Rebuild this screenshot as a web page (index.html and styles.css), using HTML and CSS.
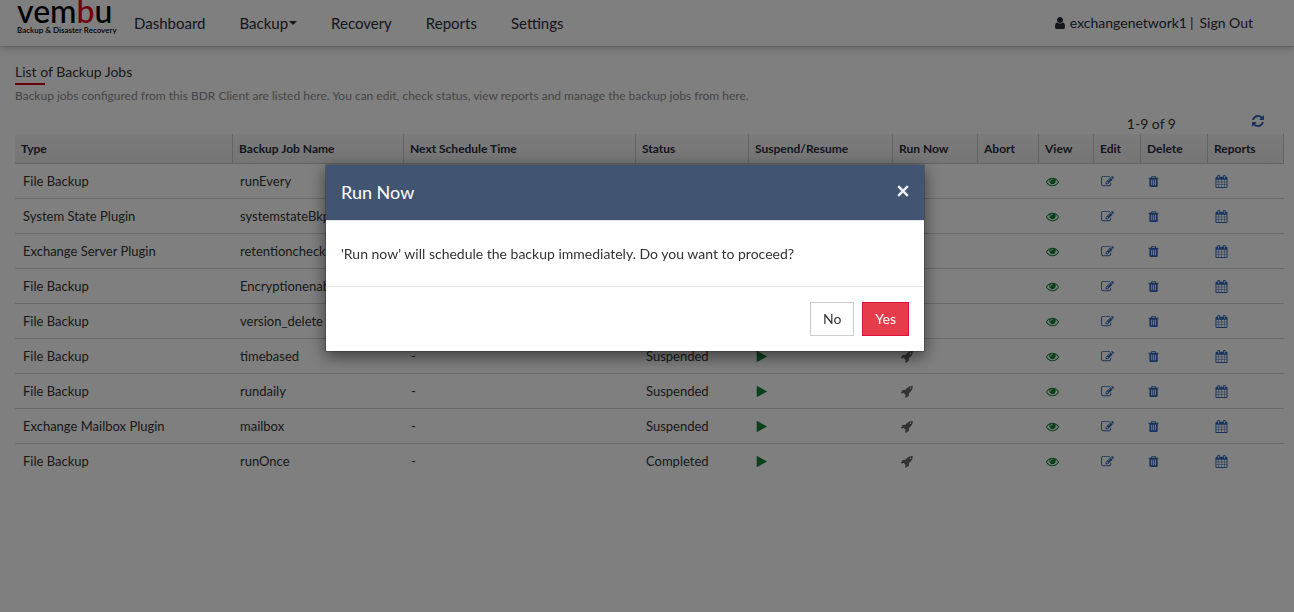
FILE: index.html
```html
<!DOCTYPE html>
<html lang="en">
<head>
<meta charset="utf-8">
<meta name="viewport" content="width=device-width, initial-scale=1">
<title>Vembu BDR - List of Backup Jobs</title>
<link rel="stylesheet" href="styles.css">
</head>
<body>
<svg class="sprite" aria-hidden="true">
  <symbol id="user" viewBox="0 0 1792 1792"><path d="M1536 1399q0 109-62.5 187t-150.5 78h-854q-88 0-150.5-78t-62.5-187q0-85 8.5-160.5t31.5-152 58.5-131 94-89 134.500-34.500q131 128 313 128t313-128q76 0 134.500 34.500t94 89 58.500 131 31.500 152 8.500 160.500zm-256-887q0 159-112.500 271.500t-271.500 112.500-271.500-112.500-112.500-271.500 112.500-271.500 271.500-112.500 271.500 112.500 112.500 271.500z"/></symbol>
  <symbol id="refresh" viewBox="0 0 1792 1792"><path d="M1639 1056q0 5-1 7-64 268-268 434.500t-478 166.500q-146 0-282.500-55t-243.500-157l-129 129q-19 19-45 19t-45-19-19-45v-448q0-26 19-45t45-19h448q26 0 45 19t19 45-19 45l-137 137q71 66 161 102t187 36q134 0 250-65t186-179q11-17 53-117 8-23 30-23h192q13 0 22.500 9.500t9.500 22.500zm25-800v448q0 26-19 45t-45 19h-448q-26 0-45-19t-19-45 19-45l138-138q-148-137-349-137-134 0-250 65t-186 179q-11 17-53 117-8 23-30 23h-199q-13 0-22.500-9.500t-9.500-22.500v-7q65-268 270-434.500t480-166.500q146 0 284 55.500t245 156.500l130-129q19-19 45-19t45 19 19 45z"/></symbol>
  <symbol id="play" viewBox="96 0 1792 1792"><path d="M1576 927l-1328 738q-23 13-39.500 3t-16.500-36v-1472q0-26 16.500-36t39.500 3l1328 738q23 13 23 31t-23 31z"/></symbol>
  <symbol id="rocket" viewBox="-96 0 1792 1792"><path d="M1440 448q0-40-28-68t-68-28-68 28-28 68 28 68 68 28 68-28 28-68zm224-288q0 249-75.500 430.500t-253.500 360.500q-81 80-195 176l-20 379q-2 16-16 26l-384 224q-7 4-16 4-12 0-23-9l-64-64q-13-14-8-32l85-276-281-281-276 85q-3 1-9 1-14 0-23-9l-64-64q-17-19-5-39l224-384q10-14 26-16l379-20q96-114 176-195 188-187 358-258t431-71q14 0 24 9.500t10 22.500z"/></symbol>
  <symbol id="eye" viewBox="0 0 1792 1792"><path d="M1664 960q-152-236-381-353 61 104 61 225 0 185-131.500 316.500t-316.500 131.500-316.500-131.500-131.500-316.500q0-121 61-225-229 117-381 353 133 205 333.500 326.500t434.500 121.500 434.500-121.500 333.500-326.500zm-720-384q0-20-14-34t-34-14q-125 0-214.500 89.500t-89.500 214.500q0 20 14 34t34 14 34-14 14-34q0-86 61-147t147-61q20 0 34-14t14-34zm848 384q0 34-20 69-140 230-376.500 368.500t-499.500 138.500-499.500-139-376.500-368q-20-35-20-69t20-69q140-229 376.500-368t499.500-139 499.500 139 376.500 368q20 35 20 69z"/></symbol>
  <symbol id="edit" viewBox="0 0 1792 1792"><path d="M888 1184l116-116-152-152-116 116v56h96v96h56zm440-720q-16-16-33 1l-350 350q-17 17-1 33t33-1l350-350q17-17 1-33zm80 594v190q0 119-84.500 203.500t-203.500 84.500h-832q-119 0-203.500-84.500t-84.500-203.500v-832q0-119 84.500-203.500t203.500-84.500h832q63 0 117 25 15 7 18 23 3 17-9 29l-49 49q-14 14-32 8-23-6-45-6h-832q-66 0-113 47t-47 113v832q0 66 47 113t113 47h832q66 0 113-47t47-113v-126q0-13 9-22l64-64q15-15 35-7t20 29zm-96-738l288 288-672 672h-288v-288zm444 132l-92 92-288-288 92-92q28-28 68-28t68 28l152 152q28 28 28 68t-28 68z"/></symbol>
  <symbol id="trash" viewBox="128 0 1792 1792"><path d="M704 1376v-704q0-14-9-23t-23-9h-64q-14 0-23 9t-9 23v704q0 14 9 23t23 9h64q14 0 23-9t9-23zm256 0v-704q0-14-9-23t-23-9h-64q-14 0-23 9t-9 23v704q0 14 9 23t23 9h64q14 0 23-9t9-23zm256 0v-704q0-14-9-23t-23-9h-64q-14 0-23 9t-9 23v704q0 14 9 23t23 9h64q14 0 23-9t9-23zm-544-992h448l-48-117q-7-9-17-11h-317q-10 2-17 11zm928 32v64q0 14-9 23t-23 9h-96v948q0 83-47 143.500t-113 60.500h-832q-66 0-113-58.500t-47-141.500v-952h-96q-14 0-23-9t-9-23v-64q0-14 9-23t23-9h309l70-167q15-37 54-63t79-26h320q40 0 79 26t54 63l70 167h309q14 0 23 9t9 23z"/></symbol>
  <symbol id="calendar" viewBox="0 0 1792 1792"><path d="M192 1664h288v-288h-288v288zm352 0h320v-288h-320v288zm-352-352h288v-320h-288v320zm352 0h320v-320h-320v320zm-352-384h288v-288h-288v288zm736 736h320v-288h-320v288zm-384-736h320v-288h-320v288zm768 736h288v-288h-288v288zm-384-352h320v-320h-320v320zm-352-864v-288q0-13-9.500-22.500t-22.500-9.500h-64q-13 0-22.500 9.500t-9.500 22.500v288q0 13 9.500 22.500t22.500 9.500h64q13 0 22.500-9.500t9.500-22.500zm736 864h288v-320h-288v320zm-384-384h320v-288h-320v288zm384 0h288v-288h-288v288zm32-480v-288q0-13-9.500-22.500t-22.500-9.500h-64q-13 0-22.500 9.500t-9.500 22.500v288q0 13 9.500 22.500t22.500 9.500h64q13 0 22.500-9.500t9.500-22.500zm384-64v1280q0 52-38 90t-90 38h-1408q-52 0-90-38t-38-90v-1280q0-52 38-90t90-38h128v-96q0-66 47-113t113-47h64q66 0 113 47t47 113v96h384v-96q0-66 47-113t113-47h64q66 0 113 47t47 113v96h128q52 0 90 38t38 90z"/></symbol>
</svg>

<header class="topbar">
  <a class="logo" href="#">
    <span class="logo-name">vem<span class="logo-accent">b</span>u</span>
    <span class="logo-tag">Backup &amp; Disaster Recovery</span>
  </a>
  <nav class="menu">
    <a href="#">Dashboard</a>
    <a href="#">Backup<span class="caret"></span></a>
    <a href="#">Recovery</a>
    <a href="#">Reports</a>
    <a href="#">Settings</a>
  </nav>
  <div class="account">
    <svg class="icon large"><use href="#user"/></svg>
    <span>exchangenetwork1</span>
    <span>|</span>
    <a class="signout" href="#">Sign Out</a>
  </div>
</header>

<main class="page">
  <h1 class="title">List of Backup Jobs</h1>
  <p class="intro">Backup jobs configured from this BDR Client are listed here. You can edit, check status, view reports and manage the backup jobs from here.</p>
  <div class="pager">
    <span>1-9 of 9</span>
    <button class="icon-btn blue refresh" aria-label="Refresh"><svg class="icon large"><use href="#refresh"/></svg></button>
  </div>
  <table class="jobs">
    <colgroup>
      <col class="c-type"><col class="c-name"><col class="c-next"><col class="c-status"><col class="c-suspend"><col class="c-run"><col class="c-abort"><col class="c-view"><col class="c-edit"><col class="c-delete"><col class="c-reports">
    </colgroup>
    <thead>
      <tr><th>Type</th><th>Backup Job Name</th><th>Next Schedule Time</th><th>Status</th><th>Suspend/Resume</th><th>Run Now</th><th>Abort</th><th>View</th><th>Edit</th><th>Delete</th><th>Reports</th></tr>
    </thead>
    <tbody id="rows"></tbody>
  </table>
</main>

<div class="backdrop">
  <section class="modal" role="dialog" aria-modal="true" aria-labelledby="modal-title">
    <header class="modal-head">
      <h2 id="modal-title">Run Now</h2>
      <button class="close" aria-label="Close"><svg class="cross" viewBox="0 0 10 10"><path d="M1 1l8 8M9 1l-8 8"/></svg></button>
    </header>
    <p class="modal-body">'Run now' will schedule the backup immediately. Do you want to proceed?</p>
    <footer class="modal-foot">
      <button class="btn">No</button>
      <button class="btn primary">Yes</button>
    </footer>
  </section>
</div>
<script src="app.js"></script>
</body>
</html>
```

FILE: styles.css
```css
* { box-sizing: border-box; }
body {
  margin: 0;
  background: #fff;
  color: #333;
  font-family: Lato, "Liberation Sans", sans-serif;
  font-size: 13px;
  line-height: 20px;
}
a { color: inherit; text-decoration: none; }
button { font: inherit; cursor: pointer; }
.sprite { display: none; }
.icon { width: 13px; height: 13px; fill: currentColor; display: block; }
.icon.large { width: 14px; height: 14px; }

/* top bar */
.topbar {
  display: flex;
  align-items: center;
  height: 47px;
  padding: 0 41px 0 17px;
  border-bottom: 1px solid #c4c4c4;
  box-shadow: 0 2px 8px rgba(0, 0, 0, .2);
  color: #2b2b3d;
}
.logo { display: flex; flex-direction: column; width: 100px; height: 46px; color: #000; }
.logo-name { font-size: 32px; line-height: 21px; font-weight: 500; }
.logo-accent { color: #e2001a; }
.logo-tag { font-size: 8px; line-height: 18px; font-weight: 600; white-space: nowrap; }
.menu { display: flex; font-size: 15px; }
.menu a { display: flex; align-items: center; padding: 0 17px; }
.caret { border: 4px solid transparent; border-top-color: currentColor; border-bottom: 0; margin-left: 1px; }
.account { display: flex; align-items: center; gap: 3px; margin-left: auto; font-size: 14px; }
.signout { margin-left: 3px; }

/* page */
.page { padding: 15px 10px 0 15px; }
.title { margin: 0; font-size: 14px; line-height: 20px; font-weight: 400; }
.title::after { content: ""; display: block; width: 30px; height: 2px; margin-top: 1px; background: #d80010; }
.intro { margin: 1px 0 0; font-size: 12px; line-height: 20px; color: #8c8c8c; }
.pager { display: flex; align-items: center; justify-content: flex-end; gap: 75px; height: 28px; padding: 8px 19px 0 0; font-size: 14px; }
.icon-btn { display: block; padding: 0; border: 0; background: none; color: inherit; }
.refresh { padding-bottom: 6px; }
.blue { color: #3068b8; }
.green { color: #148038; }
.gray { color: #666; }

.jobs { width: 100%; table-layout: fixed; border-collapse: separate; border-spacing: 0; text-align: left; }
.c-type { width: 218px; }
.c-name { width: 171px; }
.c-next { width: 232px; }
.c-status { width: 113px; }
.c-suspend { width: 144px; }
.c-run { width: 85px; }
.c-abort { width: 61px; }
.c-view { width: 55px; }
.c-edit { width: 47px; }
.c-delete { width: 67px; }
.c-reports { width: 76px; }
.jobs th {
  height: 30px;
  padding: 0 6px;
  border-right: 1px solid #c8c8c8;
  border-bottom: 1px solid #c8c8c8;
  background: linear-gradient(#f6f6f6, #ebebeb);
  color: #2b2b3d;
  font-size: 12px;
  white-space: nowrap;
}
.jobs td { height: 35px; padding: 0 7px; border-bottom: 1px solid #d6d6d6; white-space: nowrap; }
.jobs td:first-child { padding-left: 8px; }
.jobs td.status { padding-left: 10px; }
.jobs tr:last-child td { border-bottom-color: transparent; }

/* dialog */
.backdrop {
  position: fixed;
  inset: 0;
  display: flex;
  justify-content: center;
  align-items: flex-start;
  padding: 164px 44px 0 0;
  background: rgba(0, 0, 0, .5);
}
.modal {
  width: 600px;
  max-width: 100%;
  border: 1px solid rgba(0, 0, 0, .2);
  background: #fff;
  background-clip: padding-box;
  box-shadow: 0 5px 15px rgba(0, 0, 0, .5);
}
.modal-head {
  display: flex;
  align-items: center;
  justify-content: space-between;
  height: 56px;
  padding: 0 15px 2px;
  border-bottom: 1px solid #e5e5e5;
  background: #415573;
  background-clip: padding-box;
  color: #fff;
}
.modal-head h2 { margin: 0; font-size: 18px; line-height: 26px; font-weight: 400; }
.close { padding: 0 0 2px; border: 0; background: none; }
.cross { display: block; width: 12px; height: 12px; fill: none; stroke: #eef0f4; stroke-width: 2; }
.modal-body { margin: 0; padding: 23px 15px 22px; border-bottom: 1px solid #e5e5e5; font-size: 14px; }
.modal-foot { display: flex; justify-content: flex-end; gap: 8px; padding: 15px; }
.btn { height: 34px; padding: 0 12px; border: 1px solid #ccc; background: #fff; color: #333; font-size: 14px; }
.btn.primary { border-color: #dc1436; background: #e63b4b; color: #fff; }
```

FILE: app.js
```js
const jobs = [
  ["File Backup", "runEvery", "Suspended"],
  ["System State Plugin", "systemstateBkp", "Suspended"],
  ["Exchange Server Plugin", "retentioncheck", "Suspended"],
  ["File Backup", "Encryptionenabled", "Suspended"],
  ["File Backup", "version_delete", "Suspended"],
  ["File Backup", "timebased", "Suspended"],
  ["File Backup", "rundaily", "Suspended"],
  ["Exchange Mailbox Plugin", "mailbox", "Suspended"],
  ["File Backup", "runOnce", "Completed"]
];

const action = (icon, tone, label) =>
  `<td>${icon ? `<button class="icon-btn ${tone}" aria-label="${label}"><svg class="icon"><use href="#${icon}"/></svg></button>` : ""}</td>`;

document.getElementById("rows").innerHTML = jobs.map(([type, name, status]) =>
  `<tr><td>${type}</td><td>${name}</td><td>-</td><td class="status">${status}</td>` +
  action("play", "green", "Resume") +
  action("rocket", "gray", "Run now") +
  action("") +
  action("eye", "green", "View") +
  action("edit", "blue", "Edit") +
  action("trash", "blue", "Delete") +
  action("calendar", "blue", "Reports") + "</tr>"
).join("");
```
